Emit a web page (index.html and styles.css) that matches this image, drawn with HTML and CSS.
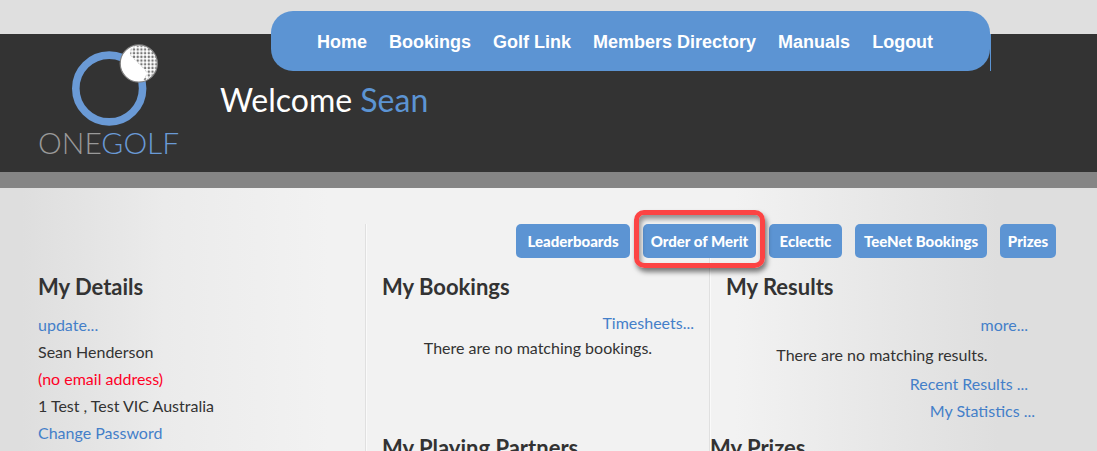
FILE: index.html
```html
<!DOCTYPE html>
<html lang="en">
<head>
  <meta charset="utf-8">
  <meta name="viewport" content="width=device-width, initial-scale=1">
  <title>OneGolf</title>
  <link rel="stylesheet" href="styles.css">
</head>
<body>
  <header class="header">
    <a class="logo" href="#">
      <svg class="logo-mark" viewBox="0 0 88 84" aria-hidden="true">
        <defs>
          <pattern id="dimples" x="1" y="1" width="3.7" height="3.7" patternUnits="userSpaceOnUse">
            <circle cx="1.8" cy="1.8" r="1.25" fill="#777"/>
          </pattern>
        </defs>
        <circle cx="37.2" cy="45.5" r="33.4" fill="none" stroke="#6a9ad6" stroke-width="7.6"/>
        <circle cx="66.8" cy="20.5" r="18.6" fill="#fff" stroke="#808080" stroke-width="1.2"/>
        <path d="M59 5Q67 1 75 4Q85 9 85 20Q85 33 70 38Q77 31 73 27L58 12Z" fill="url(#dimples)"/>
      </svg>
      <span class="logo-text">ONE<b>GOLF</b></span>
    </a>
    <div class="header-main">
      <nav class="nav">
        <ul>
          <li><a href="#">Home</a></li>
          <li><a href="#">Bookings</a></li>
          <li><a href="#">Golf Link</a></li>
          <li><a href="#">Members Directory</a></li>
          <li><a href="#">Manuals</a></li>
          <li><a href="#">Logout</a></li>
        </ul>
      </nav>
      <h1 class="welcome">Welcome <span>Sean</span></h1>
    </div>
  </header>

  <main class="content">
    <div class="buttons">
      <button type="button">Leaderboards</button>
      <div class="marked"><button type="button">Order of Merit</button></div>
      <button type="button">Eclectic</button>
      <button type="button">TeeNet Bookings</button>
      <button type="button">Prizes</button>
    </div>

    <div class="columns">
      <section class="details">
        <h2>My Details</h2>
        <p><a href="#">update...</a></p>
        <p>Sean Henderson</p>
        <p class="missing">(no email address)</p>
        <p>1 Test , Test VIC Australia</p>
        <p><a href="#">Change Password</a></p>
      </section>
      <section class="bookings">
        <h2>My Bookings</h2>
        <p class="more"><a href="#">Timesheets...</a></p>
        <p class="empty">There are no matching bookings.</p>
        <h2 class="second">My Playing Partners</h2>
      </section>
      <section class="results">
        <h2>My Results</h2>
        <p class="more"><a href="#">more...</a></p>
        <p class="empty">There are no matching results.</p>
        <p class="more"><a href="#">Recent Results ...</a></p>
        <p class="stats"><a href="#">My Statistics ...</a></p>
        <h2 class="second">My Prizes</h2>
      </section>
    </div>
  </main>
</body>
</html>
```

FILE: styles.css
```css
* {box-sizing: border-box;}
html {scrollbar-width: none;}
body {margin: 0; font-family: Lato, sans-serif; font-size: 16px; line-height: 20px; color: #333;
  background: linear-gradient(to right, #dedede 2%, #ebebeb 15%, #f2f2f2 30%, #f2f2f2 67%, #dedede 91%);}
h1, h2, p, ul {margin: 0; padding: 0;}
a {color: #447fc9; text-decoration: none;}

.header {display: flex; height: 188px; padding: 11px 38px 0; border-bottom: 16px solid #858585;
  background: linear-gradient(#dfdfdf 34px, #333 34px);}
.logo {flex: none; width: 182px; padding-top: 32px;}
.logo-mark {display: block; width: 88px; height: 84px; margin-left: 34px;}
.logo-text {display: block; font-size: 30px; line-height: 30px; font-weight: 300; color: #999;}
.logo-text b {font-weight: 300; color: #6a9ad6;}
.header-main {flex: 1;}

.nav {position: relative; max-width: 720px; margin-left: 51px; padding-right: 1px;}
.nav::after {content: ""; position: absolute; top: 23px; right: 0; bottom: 0; width: 1px; background: #5c94d3;}
.nav ul {display: flex; gap: 22px; padding: 2px 46px 0; border-radius: 22px; background: #5c94d3; list-style: none;}
.nav a {display: block; font: bold 18px/58px "Liberation Sans", sans-serif; color: #fff; white-space: nowrap;}
.welcome {margin-top: 9px; font-size: 32px; line-height: 40px; font-weight: 400; color: #fff;}
.welcome span {color: #5c94d3;}

.content {padding: 36px 41px 0 38px;}
.buttons {display: grid; grid-template-columns: 114px 113px 73px 132px 56px; justify-content: end; gap: 13px;
  position: relative; z-index: 1;}
.buttons button {width: 100%; height: 34px; padding: 0; border: 0; border-radius: 5px; background: #5c94d3; color: #fff;
  font: 900 15px Lato, sans-serif; white-space: nowrap; cursor: pointer;}
.marked {position: relative;}
.marked::after {content: ""; position: absolute; inset: -14px -9px -10px; border: 5px solid #fc4444; border-radius: 10px;
  box-shadow: 2px 4px 5px rgba(0,0,0,.5), inset 2px 4px 5px rgba(0,0,0,.4); pointer-events: none;}

/* the column rules start behind the buttons */
.columns {display: grid; grid-template-columns: 327px 344px 1fr; margin-top: -34px;}
.columns section {padding-top: 50px;}
.bookings, .results {border-left: 1px solid #e0e0e0; box-shadow: inset 1px 0 #fafafa; padding-left: 16px;}
h2 {font-size: 22px; line-height: 26px; font-weight: 700; color: #333;}
.details p {margin-top: 7px;}
.details h2 + p {margin-top: 15px;}
.missing {color: #ff0026;}
.more {text-align: right;}
.empty {text-align: center;}
.bookings {padding-right: 15px;}
.bookings .more {margin-top: 13px;}
.bookings .empty {margin-top: 5px;}
.bookings .second {margin-top: 77px;}
.results .more {margin: 15px 28px 0 0;}
.results .empty {margin: 10px 18px 0 0;}
.results .empty + .more {margin-top: 9px;}
.stats {margin: 7px 21px 0 0; text-align: right;}
.results .second {margin: 14px 0 0 -16px;}
```
